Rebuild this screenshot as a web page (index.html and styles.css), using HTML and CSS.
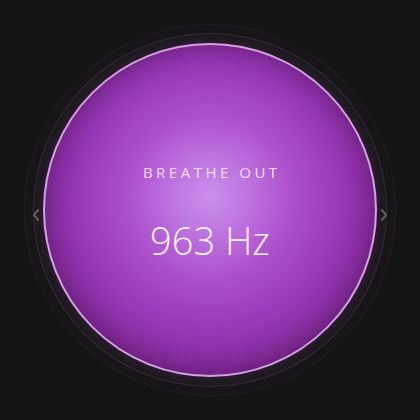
FILE: index.html
```html
<!DOCTYPE html>
<html>
<head>
<meta charset="utf-8">
<link rel="stylesheet" href="styles.css">
</head>
<body>
<div class="stage">
  <div class="ring-outer">
    <div class="ring-inner">
      <div class="orb">
        <div class="phase">BREATHE OUT</div>
        <div class="freq">963 Hz</div>
      </div>
    </div>
  </div>
  <button class="nav prev" aria-label="Previous">
    <svg width="10" height="14" viewBox="0 0 10 14"><path d="M7 2 L3 7 L7 12" fill="none" stroke="#666" stroke-width="2" stroke-linecap="round" stroke-linejoin="round"/></svg>
  </button>
  <button class="nav next" aria-label="Next">
    <svg width="10" height="14" viewBox="0 0 10 14"><path d="M3 2 L7 7 L3 12" fill="none" stroke="#666" stroke-width="2" stroke-linecap="round" stroke-linejoin="round"/></svg>
  </button>
</div>
</body>
</html>
```
FILE: styles.css
```css
html, body {
  margin: 0;
  padding: 0;
  background: #131414;
}
.stage {
  position: relative;
  width: 420px;
  height: 420px;
  display: flex;
  align-items: center;
  justify-content: center;
  font-family: "Open Sans", "Noto Sans", sans-serif;
  background: radial-gradient(circle at 50% 50%, #19161a 0%, #161516 45%, #131414 70%);
}
.ring-outer {
  width: 372px;
  height: 372px;
  box-sizing: border-box;
  border-radius: 50%;
  border: 1px solid rgba(200, 170, 210, 0.06);
  display: flex;
  align-items: center;
  justify-content: center;
  background: radial-gradient(circle, rgba(40, 25, 45, 0.2) 90%, rgba(30, 25, 32, 0.1) 100%);
}
.ring-inner {
  width: 354px;
  height: 354px;
  box-sizing: border-box;
  border-radius: 50%;
  border: 1px solid rgba(215, 175, 225, 0.13);
  display: flex;
  align-items: center;
  justify-content: center;
  background: #1b181c;
}
.orb {
  width: 334px;
  height: 334px;
  box-sizing: border-box;
  border-radius: 50%;
  border: 2px solid #d3a0e0;
  background: radial-gradient(circle at 50% 46%, #c98fee 0%, #bf78e2 14%, #ad50cb 34%, #9e3dbd 50%, #9132ab 63%, #7f2994 76%, #6a2179 88%, #551760 100%);
  box-shadow: 0 0 12px rgba(140, 50, 160, 0.28), inset 0 0 30px rgba(55, 8, 65, 0.5);
  display: flex;
  flex-direction: column;
  align-items: center;
  justify-content: center;
  gap: 36px;
  padding-top: 3px;
}
.phase {
  font-size: 15px;
  line-height: 20px;
  letter-spacing: 3.5px;
  margin-right: -3.5px;
  color: #f5ddf9;
  font-weight: 400;
}
.freq {
  font-size: 38px;
  line-height: 44px;
  font-weight: 300;
  color: #fcf2fd;
}
.nav {
  position: absolute;
  top: 207px;
  width: 14px;
  height: 16px;
  padding: 0;
  border: 0;
  background: transparent;
  display: flex;
  align-items: center;
  justify-content: center;
}
.prev { left: 29px; }
.next { left: 377px; }
```
